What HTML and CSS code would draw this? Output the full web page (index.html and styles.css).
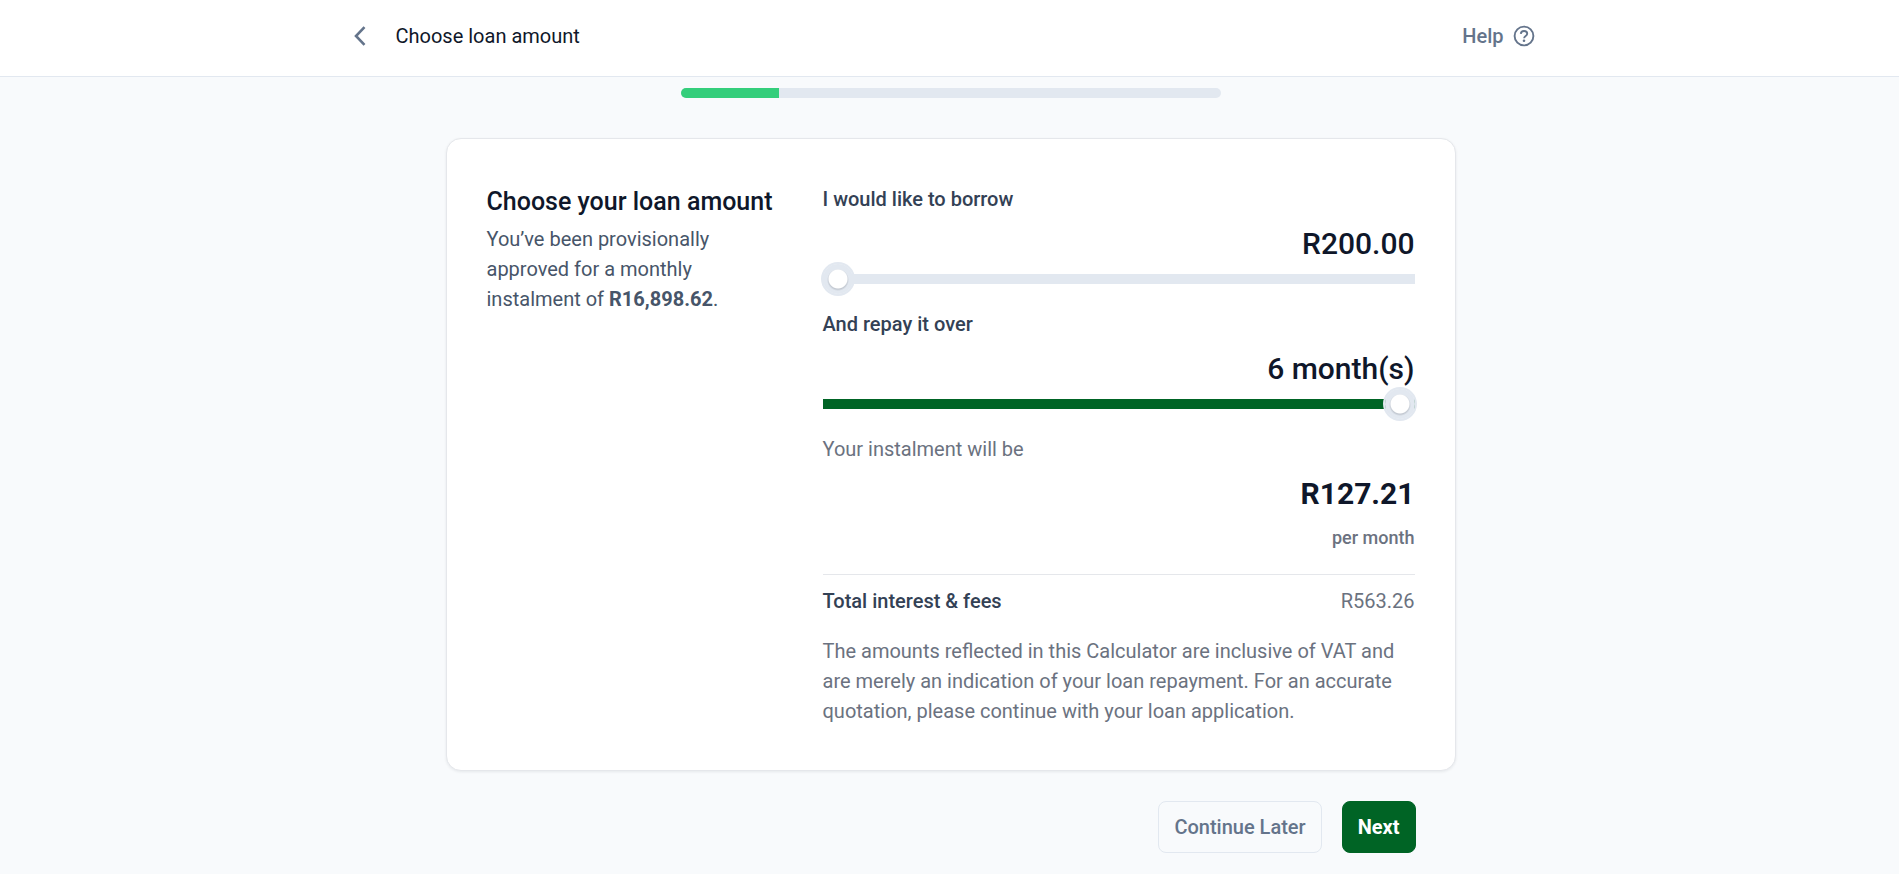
FILE: index.html
```html
<!DOCTYPE html>
<html lang="en">
<head>
<meta charset="utf-8">
<meta name="viewport" content="width=device-width, initial-scale=1">
<title>Choose loan amount</title>
<link rel="stylesheet" href="styles.css">
</head>
<body>
<header class="topbar">
  <div class="topbar-inner">
    <button class="back" type="button" aria-label="Back">
      <svg width="12" height="20" viewBox="0 0 12 20" fill="none" stroke="currentColor" stroke-width="2.600" aria-hidden="true"><path d="M10.500 1.200 2 10l8.500 8.800"/></svg>
    </button>
    <span class="topbar-title">Choose loan amount</span>
    <a class="help" href="#help">Help
      <svg width="22" height="22" viewBox="0 0 22 22" fill="none" stroke="currentColor" stroke-width="1.900" aria-hidden="true"><circle cx="11" cy="11" r="9.400"/><path d="M7.800 8.900C7.900 7.200 9.200 6 11 6c1.900 0 3.200 1.200 3.200 2.800 0 2.300-3.100 2.200-3.100 4.500"/><circle cx="11" cy="15.700" r="1.300" fill="currentColor" stroke="none"/></svg>
    </a>
  </div>
</header>
<main class="page">
  <div class="progress" role="progressbar" aria-label="Application progress" aria-valuenow="18" aria-valuemin="0" aria-valuemax="100"><div class="progress-fill" style="width:18.2%"></div></div>
  <form class="loan">
    <div class="card">
      <section class="intro">
        <h1 class="intro-title">Choose your loan amount</h1>
        <p class="intro-text">You’ve been provisionally approved for a monthly instalment of <strong>R16,898.62</strong>.</p>
      </section>
      <section class="calculator">
        <div class="field">
          <label class="field-label" for="amount">I would like to borrow</label>
          <output class="field-value" for="amount">R200.00</output>
          <input class="slider" id="amount" type="range" min="200" max="50000" value="200">
        </div>
        <div class="field">
          <label class="field-label" for="term">And repay it over</label>
          <output class="field-value" for="term">6 month(s)</output>
          <input class="slider slider-full" id="term" type="range" min="1" max="6" value="6">
        </div>
        <div class="result">
          <span class="result-label">Your instalment will be</span>
          <strong class="result-value">R127.21</strong>
          <span class="result-unit">per month</span>
        </div>
        <div class="total">
          <span class="total-label">Total interest &amp; fees</span>
          <span>R563.26</span>
        </div>
        <p class="note">The amounts reflected in this Calculator are inclusive of VAT and are merely an indication of your loan repayment. For an accurate quotation, please continue with your loan application.</p>
      </section>
    </div>
    <div class="actions">
      <button class="button button-outline" type="button">Continue Later</button>
      <button class="button button-primary" type="submit">Next</button>
    </div>
  </form>
</main>
</body>
</html>
```

FILE: styles.css
```css
*,
*::before,
*::after {
  box-sizing: border-box;
}

body {
  margin: 0;
  background: #f8fafc;
  color: #64748b;
  font-family: Roboto, "Noto Sans", sans-serif;
  font-size: 20px;
  line-height: 30px;
}

h1,
p {
  margin: 0;
}

button {
  font: inherit;
  cursor: pointer;
}

.topbar {
  background: #fff;
  border-bottom: 1px solid #e2e8f0;
}

.topbar-inner {
  display: flex;
  align-items: center;
  max-width: 1200px;
  margin: 0 auto;
  padding: 21px 15px 25px 4px;
}

.back {
  display: flex;
  padding: 0;
  border: 0;
  background: none;
  color: #64748b;
}

.topbar-title {
  margin-left: 30px;
  color: #0f172a;
}

.help {
  display: flex;
  align-items: center;
  gap: 9px;
  margin-left: auto;
  color: #64748b;
  font-weight: 500;
  text-decoration: none;
}

.page {
  padding: 11px 20px 20px 22px;
}

.progress {
  max-width: 540px;
  height: 10px;
  margin: 0 auto 40px;
  border-radius: 5px;
  background: #e2e8f0;
  overflow: hidden;
}

.progress-fill {
  height: 100%;
  background: #34ce7b;
}

.loan {
  max-width: 1010px;
  margin: 0 auto;
}

.card {
  display: grid;
  grid-template-columns: 1fr 2fr;
  gap: 40px;
  padding: 45px 40px 44px;
  border: 1px solid #e5e7eb;
  border-radius: 15px;
  background: #fff;
  box-shadow: 0 1px 3px rgba(15, 23, 42, 0.08);
}

.intro-title {
  margin-bottom: 5px;
  color: #0f172a;
  font-size: 25px;
  font-weight: 500;
  line-height: 35px;
  white-space: nowrap;
}

.intro-text {
  color: #475569;
}

.calculator {
  display: flex;
  flex-direction: column;
  color: #6b7280;
}

.field {
  display: flex;
  flex-direction: column;
  margin-bottom: 25px;
}

.field-label,
.total-label {
  color: #334155;
  font-weight: 500;
}

.field-value,
.result-value {
  margin: 7px 0 8px;
  color: #0f172a;
  font-size: 30px;
  font-weight: 500;
  line-height: 45px;
  text-align: right;
}

.slider {
  width: 100%;
  height: 10px;
  margin: 0;
  background: #e2e8f0;
  appearance: none;
}

.slider-full {
  background: #006425;
}

.slider::-webkit-slider-thumb {
  width: 30px;
  height: 30px;
  border-radius: 50%;
  background:
    radial-gradient(circle, #fff 9px, transparent 10px),
    radial-gradient(circle at 50% 16px, #c0c6cf 9px, #e2e8f0 11px);
  box-shadow: 0 0 0 2px #e2e8f0, 0 0 0 1px #e2e8f0, inset 0 0 0 1px #e2e8f0;
  appearance: none;
}

.result {
  display: flex;
  flex-direction: column;
  padding-bottom: 23px;
  border-bottom: 1px solid #e5e7eb;
}

.result-value {
  font-weight: 700;
}

.result-unit {
  font-size: 18px;
  font-weight: 500;
  line-height: 27px;
  text-align: right;
}

.total {
  display: flex;
  justify-content: space-between;
  padding: 11px 0 20px;
}

.actions {
  display: flex;
  justify-content: flex-end;
  gap: 20px;
  padding: 30px 40px 0;
}

.button {
  padding: 10px 15px;
  border: 1px solid #e2e8f0;
  border-radius: 8px;
  font-weight: 500;
}

.button-outline {
  background: transparent;
  color: #64748b;
}

.button-primary {
  border-color: #006425;
  background: #006425;
  color: #fff;
  font-weight: 700;
}
```
